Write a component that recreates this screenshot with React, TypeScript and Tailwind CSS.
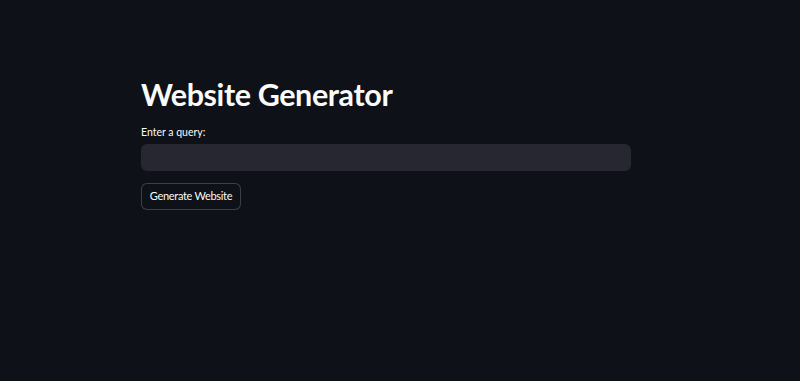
export default function App() {
    return (
        <div className="min-h-[381px] w-full bg-[#0e1117] font-['Lato',sans-serif] text-[#fafafa]">
            <div className="ml-[141px] w-[490px] pt-[72px]">
                <h1 className="text-[30.5px] font-bold leading-[44px] tracking-[-0.4px]">Website Generator</h1>
                <label className="mt-[9px] block text-[10.5px] leading-[14px]">Enter a query:</label>
                <input
                    type="text"
                    className="mt-[5px] block h-[27px] w-full rounded-[6px] border border-transparent bg-[#262730] px-2 text-[12px] text-[#fafafa] outline-none"
                />
                <button className="mt-[12px] h-[27px] w-[100px] rounded-[6px] border border-[rgba(250,250,250,0.2)] bg-[#0e1117] text-[11px] tracking-[-0.3px] text-[#fafafa]">
                    Generate Website
                </button>
            </div>
        </div>
    )
}
